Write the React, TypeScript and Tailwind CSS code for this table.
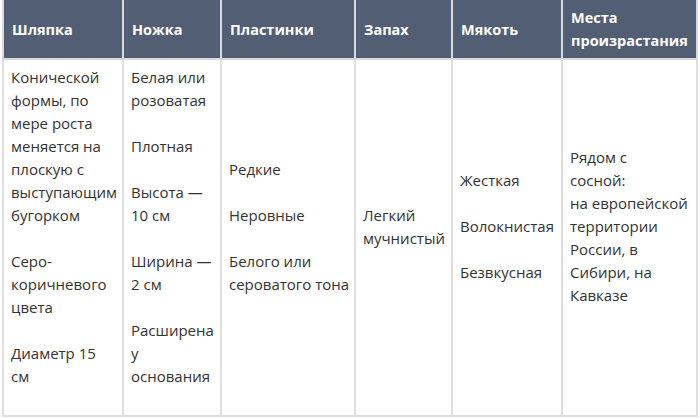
const headers = ["Шляпка", "Ножка", "Пластинки", "Запах", "Мякоть", "Места\nпроизрастания"];
const widths = ["w-[120px]", "w-[98px]", "w-[134px]", "w-[97px]", "w-[110px]", "w-[135px]"];

// each cell: list of paragraphs, each paragraph: list of lines
const cells: string[][][] = [
  [
    ["Конической", "формы, по", "мере роста", "меняется на", "плоскую с", "выступающим", "бугорком"],
    ["Серо-", "коричневого", "цвета"],
    ["Диаметр 15", "см"],
  ],
  [
    ["Белая или", "розоватая"],
    ["Плотная"],
    ["Высота —", "10 см"],
    ["Ширина —", "2 см"],
    ["Расширена", "у", "основания"],
  ],
  [["Редкие"], ["Неровные"], ["Белого или", "сероватого тона"]],
  [["Легкий", "мучнистый"]],
  [["Жесткая"], ["Волокнистая"], ["Безвкусная"]],
  [["Рядом с", "сосной:", "на европейской", "территории", "России, в", "Сибири, на", "Кавказе"]],
];

export default function App() {
  return (
    <div className="w-[700px] h-[418px] bg-white pl-[2px] font-['Open_Sans',sans-serif]">
      <table className="w-[696px] border-collapse table-fixed">
        <thead>
          <tr className="h-[59px] bg-[#525e73]">
            {headers.map((h, i) => (
              <th
                key={h}
                className={`${widths[i]} border-2 border-[#d6d9de] border-t-0 px-[8px] text-left align-middle text-[14.5px] leading-[23px] font-bold text-white whitespace-pre`}
              >
                {h}
              </th>
            ))}
          </tr>
        </thead>
        <tbody>
          <tr className="h-[357px]">
            {cells.map((paras, i) => (
              <td
                key={i}
                className="border-2 border-[#dedede] px-[7px] pt-[1px] pb-0 align-middle text-[15px] leading-[23px] text-[#333333] whitespace-nowrap"
              >
                {paras.map((lines, j) => (
                  <p key={j} className="mb-[23px]">
                    {lines.map((l, k) => (
                      <span key={k} className="block">
                        {l}
                      </span>
                    ))}
                  </p>
                ))}
              </td>
            ))}
          </tr>
        </tbody>
      </table>
    </div>
  );
}
